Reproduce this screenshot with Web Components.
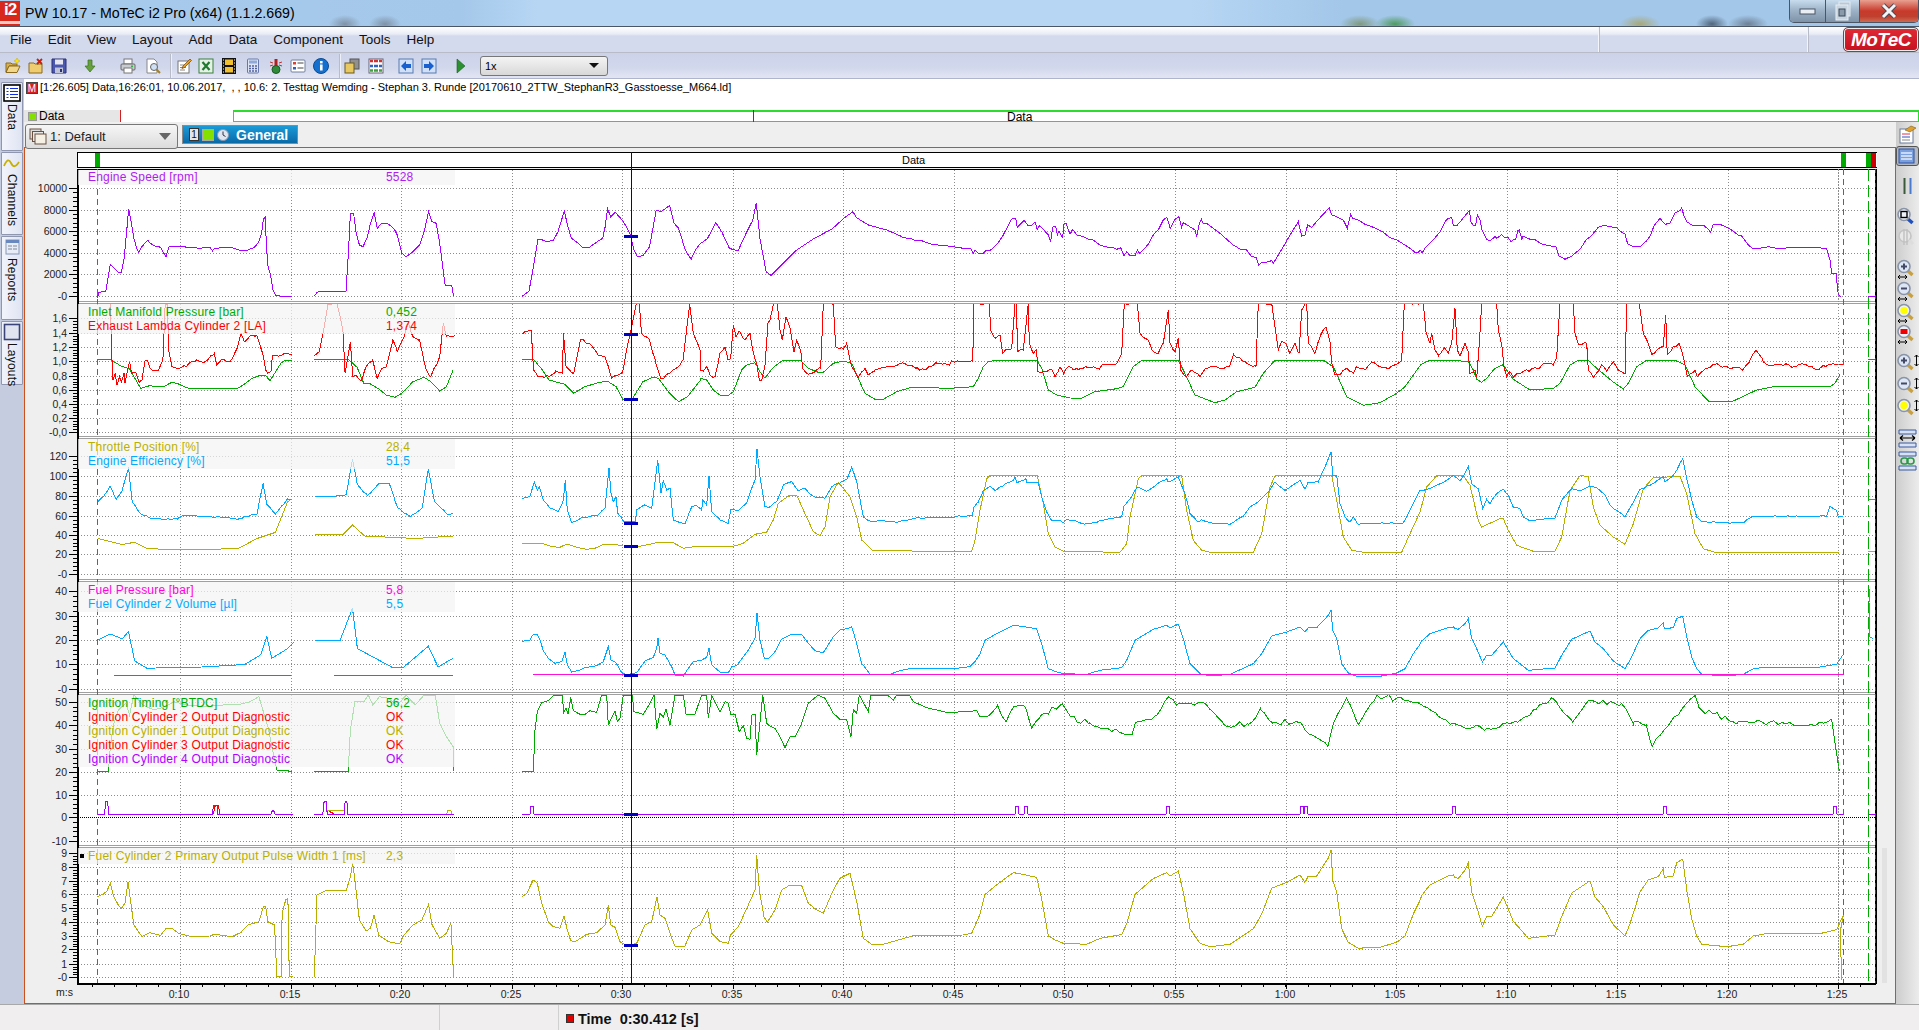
<!DOCTYPE html>
<html>
<head>
<meta charset="utf-8">
<title>MoTeC i2 Pro</title>
<style>
  html,body{margin:0;padding:0;width:1919px;height:1030px;overflow:hidden;background:#f0f0f0;}
  body{font-family:"Liberation Sans",Arial,sans-serif;}
  motec-app{width:1919px;height:1030px;}
</style>
</head>
<body>
<motec-app>
  <title-bar slot="top">PW 10.17 - MoTeC i2 Pro (x64) (1.1.2.669)</title-bar>
  <menu-bar slot="top"></menu-bar>
  <tool-bar slot="top"></tool-bar>
  <side-tabs slot="left"></side-tabs>
  <info-row slot="center">[1:26.605] Data,16:26:01, 10.06.2017,&nbsp; , , 10.6: 2. Testtag Wemding - Stephan 3. Runde [20170610_2TTW_StephanR3_Gasstoesse_M664.ld]</info-row>
  <data-bar slot="center"></data-bar>
  <work-area slot="work">
    <combo-row slot="head"></combo-row>
    <i2-chart>
      <chart-pane name="engine" style="--lp:0">
        <legend-row color="#b01cf0" label="Engine Speed [rpm]" value="5528"></legend-row>
      </chart-pane>
      <chart-pane name="lambda">
        <legend-row color="#00aa00" label="Inlet Manifold Pressure [bar]" value="0,452"></legend-row>
        <legend-row color="#ff0000" label="Exhaust Lambda Cylinder 2 [LA]" value="1,374"></legend-row>
      </chart-pane>
      <chart-pane name="throttle">
        <legend-row color="#b8b000" label="Throttle Position [%]" value="28,4"></legend-row>
        <legend-row color="#00aaff" label="Engine Efficiency [%]" value="51,5"></legend-row>
      </chart-pane>
      <chart-pane name="fuel">
        <legend-row color="#ff00e0" label="Fuel Pressure [bar]" value="5,8"></legend-row>
        <legend-row color="#00aaff" label="Fuel Cylinder 2 Volume [µl]" value="5,5"></legend-row>
      </chart-pane>
      <chart-pane name="ignition">
        <legend-row color="#00aa00" label="Ignition Timing [°BTDC]" value="56,2"></legend-row>
        <legend-row color="#ff0000" label="Ignition Cylinder 2 Output Diagnostic" value="OK"></legend-row>
        <legend-row color="#b8b000" label="Ignition Cylinder 1 Output Diagnostic" value="OK"></legend-row>
        <legend-row color="#ff0000" label="Ignition Cylinder 3 Output Diagnostic" value="OK"></legend-row>
        <legend-row color="#b000ff" label="Ignition Cylinder 4 Output Diagnostic" value="OK"></legend-row>
      </chart-pane>
      <chart-pane name="pulse">
        <legend-row color="#b8b000" label="Fuel Cylinder 2 Primary Output Pulse Width 1 [ms]" value="2,3"></legend-row>
      </chart-pane>
    </i2-chart>
  </work-area>
  <right-tools slot="work"></right-tools>
  <status-bar slot="bottom"></status-bar>
</motec-app>

<script>
// page coords of a crop: trace points below were read off the zoomed crops
const Z3 = [0,160,2.24,3], Z4 = [0,680,2.24,3], Z7 = [480,290,3,3], Z8 = [900,170,3,3], Z9 = [1380,170,3,3];
const Z10 = [900,437,3,3], Z11 = [1380,437,3,3], Z12 = [480,580,3,3], S = [0,0,.8171,.8171];

function seg(crop, str, xmin = -1e9, xmax = 1e9){
  return str.trim().split(/\s+/).map(p => {
    const [x,y] = p.split(',').map(Number);
    return [crop[0] + x / crop[2], crop[1] + y / crop[3]];
  }).filter(p => p[0] >= xmin && p[0] <= xmax);
}

// sensor noise: the logged traces are jagged, the points read off are not
function rough(pts, amp, step = 3){
  const noise = x => { const s = Math.sin(x * 12.9898) * 43758.5453; return s - Math.floor(s) - .5; };
  const out = [];
  pts.forEach((p,i) => {
    const q = pts[i+1];
    out.push(p);
    if(!q) return;
    const dx = q[0] - p[0], dy = q[1] - p[1];
    if(Math.abs(dy) > dx * 5) return;
    for(let x = p[0] + step; x < q[0]; x += step){
      out.push([x, p[1] + dy * (x - p[0]) / dx + amp * 2 * noise(x)]);
    }
  });
  return out;
}

const PURPLE = '#aa00ff', GREEN = '#00aa00', RED = '#ff0000', OLIVE = '#b8b000', BLUE = '#00aaff', MAGENTA = '#ff10d8';

const engine3 = [].concat(
  seg(Z3,'1170,409 1185,393 1195,320 1205,238 1215,240 1225,245 1240,240 1250,215 1258,180 1264,153 1272,200 1280,235 1295,250 1305,262 1320,262 1340,243 1350,235 1355,205 1361,147 1368,170 1378,157 1395,182 1405,205 1412,225 1420,270 1428,290 1440,287 1455,260 1470,150 1480,155 1500,137 1510,190 1520,205 1535,270 1548,298 1558,270 1568,252'),
  seg(S,'578,195 585,182 590,190 596,203 603,205 610,190 615,180 618,166 621,195 626,222 630,225 640,215 650,205 665,195 680,187 690,178 697,173 700,178 710,184 725,188 734,192'),
  seg(Z8,'0,197 10,203 35,206 45,211 65,212 80,218 100,224 130,226 160,230 190,235 212,235 220,250 225,241 235,250 250,250 260,240 272,240 295,218 310,195 320,175 335,147 347,145 352,172 365,158 372,151 385,168 395,165 405,157 412,178 418,167 430,178 445,195 452,215 458,172 467,168 472,195 477,183 488,203 492,162 498,160 510,193 518,178 530,195 550,200 565,208 580,210 600,225 620,231 640,233 650,238 662,233 672,257 680,245 690,257 705,257 712,240 718,250 735,235 745,222 760,195 775,180 790,150 800,142 811,175 825,148 837,140 845,172 850,158 865,167 885,180 890,200 898,160 904,148 910,162 920,160 940,175 960,190 980,208 1000,225 1020,237 1040,240 1055,260 1068,262 1076,286 1085,276 1100,276 1115,272 1120,280 1150,230 1170,195 1195,155 1205,198 1215,195 1223,165 1235,172 1260,143 1288,113 1295,135 1310,140 1330,150 1342,175 1352,132 1358,145 1375,150 1395,163 1420,172 1450,187 1470,203 1490,210 1510,222 1530,235 1545,247 1555,248',0,1420),
  seg(Z9,'120,240 127,248 135,235 160,210 180,185 195,155 205,145 215,143 220,165 232,165 245,150 255,137 268,122 273,155 280,167 287,165 292,135 300,150 307,183 320,208 330,212 345,200 350,205 365,194 372,202 385,203 393,215 400,210 407,208 413,182 418,180 425,207 430,198 450,208 465,209 485,222 505,227 528,230 537,258 555,268 575,258 600,238 620,207 632,200 655,172 672,166 690,170 710,173 725,187 735,192 743,222 760,230 780,230 800,212 812,195 822,167 840,145 855,163 870,160 885,128 900,122 905,113 912,138 920,155 935,165 950,165 970,165 985,178 992,187 1000,163 1020,163 1050,177 1075,195 1085,198 1105,225 1120,237 1150,233 1165,230 1190,235 1250,233 1300,231 1340,236 1350,270 1355,310 1368,310 1375,375 1382,380')
);

const green3 = [].concat(
  seg(Z3,'1170,598 1195,598 1215,630 1230,660 1265,673 1285,700 1310,680 1340,668 1360,663 1380,680 1395,718 1415,720 1440,665 1462,652 1475,655 1500,700 1520,725 1540,710 1568,662'),
  seg(Z7,'660,265 680,270 700,300 720,315 745,316 760,305 785,240 800,225 825,218 840,245 855,265 880,232 905,213 960,211 985,235 1015,247 1030,247 1060,220 1090,213 1115,220 1135,265 1155,310 1185,328 1210,328 1250,305',0,900),
  seg(Z8,'0,662 35,652 150,655 220,650 235,625 250,590 265,575 285,571 410,571 425,595 445,660 470,675 510,684 545,685 585,665 650,656 670,650 685,620 700,590 725,571 835,571 850,600 885,675 945,698 975,690 1010,665 1065,652 1090,610 1125,571 1270,571 1300,590 1340,680 1390,706 1440,698 1490,670 1515,650 1560,587',900,1420),
  seg(Z9,'120,585 150,571 220,571 265,575 280,600 290,628 305,637 320,625 345,595 370,584 380,600 400,628 450,660 520,655 540,640 570,585 595,571 625,571 650,595 700,636 730,657 745,640 770,590 800,571 885,571 915,585 945,650 985,693 1060,693 1130,660 1180,650 1350,650 1365,640 1380,612')
);

const red3 = [].concat(
  seg(Z3,'1170,522 1190,512 1195,630 1205,650 1230,650 1245,632 1260,640 1262,518 1268,620 1285,640 1300,540 1320,550 1340,585 1355,590 1370,655 1395,635 1405,560 1412,520 1425,432 1432,432 1437,520 1455,540 1470,615 1480,655 1500,640 1515,625 1530,600 1545,432 1553,520 1568,570'),
  seg(Z7,'660,240 670,243 680,230 690,255 705,260 720,190 735,170 745,210 752,205 760,105 768,140 780,125 795,150 810,130 818,180 830,220 838,270 845,270 855,225 864,100 870,90 880,42 892,42 900,120 907,150 918,80 930,115 942,185 950,150 962,180 968,235 985,253 1010,240 1022,235 1030,42 1060,42 1067,170 1090,178 1100,160 1115,230 1135,262 1155,235 1165,255 1185,240 1210,232 1235,228 1258,222',0,900),
  seg(Z8,'0,580 30,585 50,592 70,600 90,590 110,580 130,580 150,582 155,572 180,575 218,575 222,400 268,400 272,480 285,505 300,495 308,550 320,540 335,535 345,400 350,400 352,545 370,540 385,400 388,520 400,550 410,540 413,605 430,605 455,598 465,620 480,590 490,612 505,590 520,600 540,595 560,592 580,590 598,597 610,582 650,580 665,550 673,400 712,400 720,490 745,510 755,540 775,550 790,520 805,420 810,520 825,545 835,505 842,600 860,620 875,600 900,620 915,597 950,590 970,597 990,585 1000,552 1040,580 1068,590 1075,400 1115,400 1125,470 1135,540 1145,515 1160,525 1170,550 1185,520 1197,550 1205,420 1215,400 1220,400 1225,520 1245,550 1260,500 1278,470 1290,515 1295,580 1305,615 1320,615 1340,595 1360,610 1370,590 1395,600 1415,575 1440,590 1465,597 1490,582 1505,570 1513,400 1520,400',900,1420),
  seg(Z9,'130,400 138,485 150,520 155,490 165,540 175,558 195,535 205,550 215,520 225,415 232,540 240,558 255,520 265,545 270,610 285,600 290,625 298,520 305,400 350,400 355,480 365,520 372,590 380,620 390,605 400,622 410,610 430,605 470,595 495,580 520,585 530,560 540,400 580,400 585,490 595,525 620,520 625,600 640,622 665,585 680,605 700,575 715,600 735,612 740,400 778,400 790,490 805,520 815,553 830,540 850,530 857,435 862,555 880,530 897,520 912,570 922,620 945,600 952,620 980,595 1010,580 1030,590 1060,592 1090,597 1110,570 1128,540 1150,575 1175,588 1200,582 1240,590 1270,582 1300,595 1320,595 1350,583 1390,583')
);

const eff3 = [].concat(
  seg(Z7,'127,625 150,618 163,575 172,600 178,590 190,630 210,655 235,665 250,630 256,570 262,660 275,698 300,685 355,675 375,655 387,533 393,610 400,635 408,620 413,670 430,693 466,695 470,660 495,645 515,655 533,510 543,610 550,572 560,600 570,595 580,690 615,702 635,650 650,648 665,660 668,630 680,645 687,558 695,665 720,690 745,700 752,660 775,662 800,640 815,595 825,570 831,478 840,560 855,650 870,650 890,635 910,585 935,575 955,603 975,595 1000,620 1025,622 1035,625 1055,590 1085,575 1100,570 1115,530 1130,575 1150,680 1170,693 1215,693 1250,697',0,900),
  seg(Z10,'0,253 50,241 150,243 180,237 217,235 222,210 235,195 250,160 270,147 285,162 310,145 340,130 345,120 350,137 378,125 380,137 415,137 425,180 440,225 455,250 480,250 490,258 500,247 530,253 555,260 580,258 600,250 665,238 672,208 690,187 712,150 740,163 770,142 800,125 805,135 835,120 855,170 870,230 895,255 905,248 935,258 990,262 1030,238 1050,210 1080,190 1100,170 1125,135 1155,160 1200,130 1215,155 1225,135 1255,135 1275,90 1293,45 1298,115 1310,115 1320,200 1335,240 1350,255 1360,240 1375,262 1450,258 1510,258 1530,220 1560,160',900,1420),
  seg(Z11,'130,160 170,145 205,127 218,115 240,133 265,88 275,140 295,155 308,215 320,187 330,200 350,170 370,157 385,175 400,210 420,215 430,240 450,252 525,243 545,190 575,155 605,160 630,148 650,152 675,175 690,205 735,240 760,195 780,157 810,145 850,120 855,135 880,115 890,100 908,65 920,125 935,190 950,240 965,255 1090,258 1115,238 1190,238 1340,238 1350,207 1370,220 1375,240 1390,238')
);

const throttle3 = [].concat(
  seg(Z7,'127,761 190,761 215,770 240,772 260,762 290,772 320,778 345,775 370,763 400,762 430,768 480,769 530,758 580,758 610,775 650,769 760,769 790,760 825,733 860,726 880,690 895,640 930,615 950,615 970,660 1000,725 1020,737 1035,710 1050,620 1075,577 1110,620 1130,680 1145,750 1180,783 1250,782',0,900),
  seg(Z10,'0,340 50,343 215,343 225,310 240,220 260,125 270,116 412,116 430,200 445,290 465,330 490,343 660,346 680,320 690,240 715,125 725,116 845,116 860,220 880,310 905,340 930,346 1060,346 1085,290 1110,150 1125,116 1295,116 1310,190 1330,300 1355,340 1390,346 1505,346 1530,290 1560,225',900,1420),
  seg(Z11,'140,150 170,116 250,116 270,145 295,250 305,270 360,245 370,245 385,280 410,325 460,343 525,343 545,300 570,160 600,116 625,118 640,210 660,265 700,300 735,322 760,260 790,155 820,122 900,118 920,170 945,290 970,335 1005,346 1378,346')
);

const vol3 = [].concat(
  seg(Z12,'127,184 150,180 158,165 172,163 180,180 190,212 205,235 225,250 245,245 255,217 262,255 275,276 300,270 315,263 350,257 370,245 385,200 393,240 408,248 425,278 440,284 470,278 495,243 520,232 530,205 534,175 540,220 555,225 575,260 585,285 610,288 625,265 640,245 665,240 680,232 687,205 695,255 720,276 745,278 755,260 770,257 790,230 805,210 825,175 831,100 840,180 853,235 865,237 885,215 905,177 935,163 965,163 985,190 1005,212 1030,218 1060,170 1080,150 1105,145 1115,140 1130,190 1145,250 1170,282 1230,283 1260,272 1295,265 1430,265 1470,260 1485,245 1500,222',0,980),
  seg(Z10,'240,650 255,610 290,590 340,565 378,570 410,575 425,620 445,695 465,703 490,710 560,712 600,700 665,692 680,670 705,610 760,577 800,565 810,572 835,562 850,605 870,680 900,710 930,717 990,712 1060,680 1085,650 1115,597 1160,585 1200,570 1215,585 1225,572 1250,572 1285,535 1293,518 1298,580 1310,605 1325,680 1345,708 1375,720 1440,718 1490,708 1515,695 1540,650 1560,622',980,1420),
  seg(Z11,'125,612 150,590 205,572 220,570 225,575 235,577 255,560 265,545 275,605 290,635 307,675 320,655 335,655 370,615 385,640 400,665 420,680 445,700 525,693 545,655 575,607 630,582 645,615 670,635 700,672 735,695 750,670 780,605 805,580 835,573 850,557 853,575 880,572 890,545 908,537 920,600 935,660 950,695 965,712 1040,717 1090,712 1120,695 1160,690 1320,690 1370,682 1390,652')
);

const timing3 = [].concat(
  seg(Z12,'127,575 160,575 165,450 172,395 185,368 205,362 222,345 248,345 250,400 258,385 264,403 272,352 280,392 300,403 315,403 330,392 350,397 365,345 380,345 385,435 405,392 412,425 420,415 430,345 457,345 462,395 490,403 510,370 522,345 530,447 540,400 550,410 558,388 570,435 585,345 610,345 618,403 645,403 665,345 680,345 685,415 695,345 720,397 735,365 745,370 752,403 765,403 778,455 790,437 800,475 810,478 815,405 825,403 830,525 848,345 860,430 868,437 885,445 900,470 915,503 930,470 945,470 965,430 985,370 1015,345 1035,355 1060,400 1080,418 1100,420 1113,470 1120,390 1130,400 1138,345 1165,395 1172,345 1222,345 1240,360 1250,345 1290,348 1300,365 1340,383 1400,397 1470,395 1490,390 1500,410'),
  rough(seg(S,'808,585 815,576 822,590 830,577 838,578 843,595 850,585 868,575 880,590 890,590 905,595 925,600 928,590 945,585 955,570 963,575 985,575 1000,592 1020,592 1030,580 1040,590 1060,590 1070,600 1085,610 1090,590 1100,570 1105,580 1110,592 1125,568 1160,575 1175,585 1190,592 1215,595 1240,590 1255,580 1268,570 1285,590 1300,572 1325,575 1335,590 1345,592 1350,610 1365,590 1385,568 1390,580 1420,590 1480,592 1497,590 1500,612 1503,630'),3,4)
);

// primary pulse follows the fuel volume trace past the part read off directly
const pulse3 = seg(Z12,'127,950 140,940 160,900 172,910 185,970 205,1025 220,1040 240,1045 252,1008 262,1050 272,1082 285,1085 320,1063 350,1058 375,1035 385,975 392,1035 405,1042 420,1085 440,1097 470,1090 495,1035 515,1025 531,950 540,1005 555,1015 575,1075 585,1098 615,1098 635,1050 660,1035 683,990 695,1060 720,1085 745,1090 752,1065 775,1040 805,975 825,930 830,825 838,930 852,1010 862,1027 885,990 905,930 930,915 965,917 985,970 1010,990 1030,1000 1060,930 1080,895 1110,880 1130,965 1150,1075 1175,1093 1210,1093 1300,1067 1450,1065 1475,1060 1500,1003')
  .concat(vol3.filter(p => p[0] > 980).map(p => [p[0], 855 + 1.463 * (p[1] - 613.3)]))
  .concat([[1840,933],[1842,980]]);

function spikes(xs, base = 814.3, top = 806){
  const pts = [[522,base]];
  xs.forEach(x => pts.push([x-2,base],[x-1,top],[x+1,top],[x+2,base]));
  pts.push([1843,base]);
  return pts;
}

const PANES = {
  engine:{ top:170, h:131,
    grid:[[188,'10000'],[210,'8000'],[231,'6000'],[253,'4000'],[274,'2000'],[296,'-0']],
    traces:[[PURPLE,[
      seg(Z3,'218,413 222,397 237,393 243,345 247,313 258,328 265,337 272,337 278,295 284,210 288,148 293,180 300,235 306,265 311,278 317,262 325,248 331,241 337,250 345,257 360,262 367,280 372,290 378,262 385,258 400,260 430,262 445,265 470,262 476,272 480,265 500,263 520,263 540,272 555,270 570,262 580,245 586,220 590,178 594,172 597,260 600,318 606,345 612,392 618,406 630,409 654,409'),
      seg(Z3,'704,409 710,397 720,394 775,394 780,290 785,160 792,160 798,220 805,255 813,260 822,235 830,190 838,157 845,205 855,190 870,192 883,207 890,225 900,280 910,290 925,275 940,255 950,215 960,155 968,185 977,190 985,250 997,375 1012,377 1016,408'),
      engine3,
      seg(Z9,'1465,380 1485,380')
    ]]]
  },
  lambda:{ top:304, h:132,
    grid:[[318,'1,6'],[333,'1,4'],[347,'1,2'],[361,'1,0'],[376,'0,8'],[390,'0,6'],[404,'0,4'],[418,'0,2'],[432,'-0,0']],
    traces:[[GREEN,[
      seg(Z3,'218,597 245,597 255,605 270,617 290,627 300,650 315,685 335,677 350,680 365,681 385,667 400,672 420,684 530,686 545,675 565,655 585,645 595,647 605,662 615,640 630,608 640,600 654,601'),
      seg(Z3,'704,598 780,598 800,622 815,670 830,672 850,688 865,705 885,712 900,700 925,665 950,652 965,665 985,693 1000,680 1015,630'),
      green3,
      seg(Z9,'1465,568 1485,568')
    ]],[RED,[
      rough(seg(Z3,'247,432 250,570 253,660 258,640 262,675 268,650 272,665 278,640 280,670 285,635 290,605 295,640 305,640 312,665 318,660 325,600 330,600 336,625 345,632 355,630 365,600 370,432 375,432 378,570 385,620 405,623 420,615 430,605 440,600 450,605 465,600 480,580 485,615 495,600 515,605 530,570 540,520 548,545 558,530 575,525 590,590 595,630 600,640 608,630 610,585 654,583'),1.5),
      rough(seg(Z3,'704,587 715,575 725,510 735,432 755,432 768,510 773,640 785,545 790,650 800,650 810,660 820,620 835,600 845,655 855,625 865,620 880,540 890,575 905,530 915,490 925,530 940,540 955,630 965,650 985,590 993,490 1000,527 1020,527'),1.5),
      rough(red3,1.5)
    ]]]
  },
  throttle:{ top:439, h:140,
    grid:[[456,'120'],[476,'100'],[496,'80'],[516,'60'],[535,'40'],[554,'20'],[574,'-0']],
    traces:[[OLIVE,[
      seg(S,'80,440 100,445 110,443 120,448 135,449 170,449 195,448 210,440 225,435 235,410 238,408'),
      seg(S,'257,437 280,437 288,429 298,438 340,440 370,438'),
      throttle3,
      seg(Z11,'1465,343 1485,343')
    ]],[BLUE,[
      rough(seg(S,'80,410 85,405 90,397 95,408 100,400 105,382 108,410 115,420 125,424 145,424 150,421 170,422 195,424 210,420 215,395 218,412 225,420 235,408 238,408'),.8),
      rough(seg(S,'257,406 270,406 283,404 288,375 292,396 300,405 310,395 318,395 325,415 335,422 345,415 350,383 355,410 365,420 370,420'),.8),
      rough(eff3,.7,4),
      seg(Z11,'1465,187 1485,187')
    ]]]
  },
  fuel:{ top:582, h:110,
    grid:[[591,'40'],[616,'30'],[640,'20'],[664,'10'],[689,'-0']],
    traces:[[BLUE,[
      seg(S,'80,523 90,518 100,522 105,516 110,540 120,546 165,545 200,543 213,535 218,520 222,538 235,530 240,525'),
      seg(S,'257,523 278,523 288,497 292,530 305,537 320,545 330,545 350,528 358,545 370,538'),
      vol3,
      seg(Z11,'1467,455 1467,495 1470,600 1480,605')
    ]],[MAGENTA,[
      seg(S,'93,552 238,552'), seg(S,'273,552 370,552'), [[533,674.3],[1843,674.3]]
    ]]]
  },
  ignition:{ top:695, h:150, zero:817,
    grid:[[702,'50'],[725,'40'],[749,'30'],[772,'20'],[795,'10'],[817,'0'],[841,'-10']],
    traces:[[GREEN,[
      seg(Z4,'218,274 243,274 247,200 255,130 265,90 282,70 290,105 300,45 320,75 345,90 370,80 390,65 420,75 460,80 500,75 540,72 560,65 580,50 600,140 620,270 654,274'),
      seg(Z4,'704,274 780,274 785,150 795,65 815,65 825,45 835,75 850,50 870,55 890,75 910,45 930,75 950,45 975,45 985,130 1000,170 1015,200 1017,274'),
      timing3
    ]],[RED,[
      seg(Z4,'478,403 482,377 490,377 492,403'), seg(Z4,'733,403 735,392 750,403 770,403')
    ]],[OLIVE,[
      seg(Z4,'733,392 770,392'), seg(Z4,'1000,403 1003,392 1010,392 1012,403'), seg(Z4,'607,403 610,392 613,392 616,403')
    ]],[PURPLE,[
      seg(Z4,'218,403 234,403 237,365 241,365 244,403 476,403 478,377 486,377 488,403 607,403 610,392 613,392 616,403 656,403'),
      seg(Z4,'704,403 723,403 726,365 731,365 733,403 771,403 773,365 777,365 779,403 1016,403'),
      spikes([532,1017,1026,1168,1302,1306,1454,1665,1835]),
      [[1868,814.3],[1875,814.3]]
    ]]]
  },
  pulse:{ top:848, h:135,
    grid:[[853,'9'],[867,'8'],[881,'7'],[894,'6'],[908,'5'],[922,'4'],[936,'3'],[949,'2'],[964,'1'],[977,'-0']],
    traces:[[OLIVE,[
      seg(Z4,'218,650 232,642 240,632 247,610 255,650 265,675 272,685 280,670 287,605 292,660 300,735 318,770 335,758 360,766 372,745 385,745 400,760 430,770 470,768 480,763 520,770 540,757 555,735 580,725 590,680 595,680 600,725 615,735 620,890 630,890 632,700 640,660 645,655 648,890 656,890'),
      seg(Z4,'704,890 710,645 730,632 775,633 785,590 790,550 795,600 805,720 820,753 830,745 838,705 848,765 870,785 895,792 905,765 925,735 945,720 960,673 968,735 985,775 1000,760 1010,728 1016,890'),
      pulse3
    ]]]
  }
};

const MAJOR_X = [];
for(let k = 0; k <= 15; k++) MAJOR_X.push(Math.round(180 + 110.55 * k));

const toPath = pts => 'M' + pts.map(p => p[0].toFixed(1) + ' ' + p[1].toFixed(1)).join('L');

class MotecApp extends HTMLElement{
  constructor(){ super(); this.attachShadow({mode:'open'}); }
  static get styles(){
    return /* css */ `
      :host{display:flex;flex-direction:column;color:#000;font-family:"Liberation Sans",Arial,sans-serif;}
      .main{flex:0 0 925px;display:flex;min-height:0;}
      .center{flex:1;display:flex;flex-direction:column;min-width:0;}
      .lower{flex:1;display:flex;min-height:0;}
    `
  }
  connectedCallback(){
    this.shadowRoot.innerHTML = /* html */ `
    <style>${MotecApp.styles}</style>
    <slot name="top"></slot>
    <div class="main">
      <slot name="left"></slot>
      <div class="center">
        <slot name="center"></slot>
        <div class="lower"><slot name="work"></slot></div>
      </div>
    </div>
    <slot name="bottom"></slot>`
  }
}

class TitleBar extends HTMLElement{
  constructor(){ super(); this.attachShadow({mode:'open'}); }
  static get styles(){
    return /* css */ `
      :host{
        display:flex;align-items:center;height:27px;box-sizing:border-box;position:relative;
        border-bottom:1px solid #4a5566;
        background:
          radial-gradient(ellipse 16px 9px at 345px 24px,#7f93a8,transparent),
          radial-gradient(ellipse 16px 9px at 385px 24px,#7f93a8,transparent),
          radial-gradient(ellipse 20px 9px at 1360px 24px,#7f9a80,transparent),
          radial-gradient(ellipse 20px 9px at 1395px 24px,#4f9a60,transparent),
          radial-gradient(ellipse 20px 9px at 1640px 24px,#a8a878,transparent),
          radial-gradient(ellipse 16px 9px at 1712px 24px,#50667c,transparent),
          radial-gradient(ellipse 20px 9px at 1748px 24px,#6e8196,transparent),
          linear-gradient(90deg,#a8cbec 0,#a4c8ea 24%,#b7d6f4 28%,#b7d6f4 62%,#a3c7e9 70%,#a3c7e9 100%);
        font-size:14.2px;
      }
      .logo{
        width:20px;height:25px;margin-right:5px;background:#d8281c;color:#fff;font-weight:bold;font-size:17px;
        line-height:18px;text-align:center;letter-spacing:-1px;flex:none;position:relative;
      }
      .logo::after{content:"";position:absolute;left:0;right:0;bottom:2px;height:3px;background:#fff;opacity:.75;}
      .title{white-space:nowrap;color:#000;}
      .ctl{margin-left:auto;display:flex;height:23px;align-self:flex-start;border:1px solid #4a5566;border-top:0;border-radius:0 0 5px 5px;overflow:hidden;box-sizing:border-box;width:130px;}
      .ctl div{display:flex;align-items:center;justify-content:center;background:linear-gradient(#c8dcee,#9fb4c8 45%,#7e93a8);border-right:1px solid #4a5566;}
      .min{width:35px;}
      .max{width:33px;}
      .x{flex:1;border-right:0 !important;background:linear-gradient(#e8a090,#c83a2a 50%,#c04030 75%,#d06a50) !important;}
    `
  }
  connectedCallback(){
    this.shadowRoot.innerHTML = /* html */ `
    <style>${TitleBar.styles}</style>
    <div class="logo">i2</div>
    <div class="title"><slot></slot></div>
    <div class="ctl">
      <div class="min"><svg width="18" height="8"><rect x="1" y="2" width="15" height="5" fill="#e8eef4" stroke="#4a5566"/></svg></div>
      <div class="max"><svg width="18" height="20"><rect x="5" y="1" width="11" height="14" fill="#b8c8d8" stroke="#e4ecf4"/><rect x="2" y="4" width="12" height="15" fill="#c8d4e0" stroke="#e8eef4"/><rect x="5" y="8" width="6" height="7" fill="#8a9aaa" stroke="#3a4a5a"/></svg></div>
      <div class="x"><svg width="18" height="16"><path d="M3 2l12 12M15 2L3 14" stroke="#4a4a55" stroke-width="5"/><path d="M3 2l12 12M15 2L3 14" stroke="#f4f4f4" stroke-width="3"/></svg></div>
    </div>`
  }
}

class MenuBar extends HTMLElement{
  constructor(){ super(); this.attachShadow({mode:'open'}); }
  static get styles(){
    return /* css */ `
      :host{
        display:flex;align-items:center;height:26px;box-sizing:border-box;position:relative;padding-left:10px;column-gap:16px;
        background:linear-gradient(#ffffff,#e9ecf5 28%,#d4daed 36%,#d4daed);
        border-bottom:1px solid #b8bcc8;font-size:13.5px;
      }
      span{color:#111;}
      .sep{position:absolute;top:0;bottom:0;width:1px;background:#f4f5fa;border-right:1px solid #b8bcc8;}
      .logo{
        position:absolute;right:0;top:0;width:76px;height:25px;box-sizing:border-box;
        border:1px solid #555;border-radius:5px;background:linear-gradient(#e02a36,#c8101e);box-shadow:inset 0 0 0 1px #eee;
        color:#fff;font-weight:bold;font-style:italic;font-size:19px;line-height:23px;text-align:center;letter-spacing:-.5px;
      }
    `
  }
  connectedCallback(){
    const items = ['File','Edit','View','Layout','Add','Data','Component','Tools','Help'];
    this.shadowRoot.innerHTML = /* html */ `
    <style>${MenuBar.styles}</style>
    ${items.map(m => `<span>${m}</span>`).join('')}
    <div class="sep" style="left:1598px"></div>
    <div class="sep" style="left:1807px"></div>
    <div class="logo">MoTeC</div>`
  }
}

const ICONS = {
  open:`<path d="M1 5h5l1 1h5v2H4l-3 6z" fill="#d8b050" stroke="#8a6a20"/><path d="M4 8h11l-3 6.5H1z" fill="#f2d68a" stroke="#8a6a20"/><path d="M12 0l1 2 2 1-2 1-1 2-1-2-2-1 2-1z" fill="#ffe600" stroke="#b89a10" stroke-width=".4"/>`,
  close:`<path d="M1 5h5l1 1h7v9H1z" fill="#f0cc70" stroke="#8a6a20"/><path d="M9 1l5 5M14 1L9 6" stroke="#c82010" stroke-width="1.8"/>`,
  save:`<path d="M1 1h14v14H1z" fill="#4a58b0" stroke="#2a3070"/><rect x="4" y="1.5" width="8" height="5" fill="#e8e8f0"/><rect x="4" y="9.5" width="8" height="5.5" fill="#c0c4d8"/><rect x="9" y="11" width="2" height="3" fill="#2a3070"/>`,
  down:`<path d="M6 2h4v6h3l-5 6-5-6h3z" fill="#68a040" stroke="#3a7020" stroke-width=".7"/>`,
  print:`<rect x="4" y="1" width="8" height="5" fill="#fff" stroke="#777"/><rect x="1" y="6" width="14" height="6" rx="1" fill="#c8ccd0" stroke="#666"/><rect x="4" y="10" width="8" height="5" fill="#fff" stroke="#777"/><rect x="11" y="7.5" width="2" height="1.5" fill="#30b040"/>`,
  preview:`<path d="M2 1h7l3 3v11H2z" fill="#fff" stroke="#888"/><circle cx="9" cy="9" r="3.5" fill="#cfe0f4" stroke="#666"/><path d="M11.5 11.5l3.5 3.5" stroke="#a08030" stroke-width="2"/>`,
  note:`<rect x="2" y="3" width="11" height="12" fill="#fff" stroke="#777"/><path d="M4 7h6M4 9.5h6M4 12h5" stroke="#888"/><path d="M14 1l1.5 1.5-7 7-2.5 1 1-2.5z" fill="#e8a020" stroke="#704010" stroke-width=".7"/>`,
  excel:`<rect x="1" y="1" width="14" height="14" fill="#e6f2e6" stroke="#3a8040"/><path d="M4.5 4l7 8M11.5 4l-7 8" stroke="#1f7a30" stroke-width="2.2"/>`,
  film:`<rect x="1" y="0" width="14" height="16" fill="#111"/><rect x="4" y="1.5" width="8" height="5.5" fill="#f0c030"/><rect x="4" y="9" width="8" height="5.5" fill="#f0c030"/><path d="M2 2h1M2 5h1M2 8h1M2 11h1M2 14h1M13 2h1M13 5h1M13 8h1M13 11h1M13 14h1" stroke="#fff"/>`,
  calc:`<rect x="2.5" y="1" width="11" height="14" rx="1" fill="#dde4f4" stroke="#6878a8"/><rect x="4" y="2.5" width="8" height="3" fill="#8fa8d8"/><path d="M4 8h2M7 8h2M10 8h2M4 10.5h2M7 10.5h2M10 10.5h2M4 13h2M7 13h2M10 13h2" stroke="#5060a0" stroke-width="1.4"/>`,
  temp:`<path d="M8 1v7" stroke="#b02020" stroke-width="3"/><path d="M2 4l3 1M14 4l-3 1M2 8l3-1M14 8l-3-1" stroke="#c03030"/><circle cx="8" cy="11.5" r="4" fill="#2f8a3a" stroke="#1a5a20"/>`,
  list:`<rect x="1" y="2" width="14" height="12" rx="1" fill="#fff" stroke="#7080a0"/><rect x="3" y="4" width="3" height="2.5" fill="#e04030"/><rect x="3" y="9" width="3" height="2.5" fill="#3060c0"/><path d="M7.5 5h6M7.5 10h6" stroke="#444"/>`,
  info:`<circle cx="8" cy="8" r="7.5" fill="#1470d0" stroke="#0c4a90"/><rect x="7" y="6.5" width="2.6" height="6" fill="#fff"/><rect x="7" y="3" width="2.6" height="2.4" fill="#fff"/>`,
  copies:`<rect x="6" y="1" width="9" height="10" fill="#909090" stroke="#555"/><rect x="1" y="5" width="9" height="10" fill="#e8c860" stroke="#6a5a20"/>`,
  grid:`<rect x="1" y="1" width="14" height="14" fill="#fff" stroke="#667"/><path d="M2 3h3M6 3h4M11 3h3" stroke="#d03030" stroke-width="2.4"/><path d="M2 8h3M6 8h4M11 8h3" stroke="#3060c0" stroke-width="2.4"/><path d="M2 12.5h3M6 12.5h4M11 12.5h3" stroke="#40a040" stroke-width="2.4"/>`,
  back:`<rect x="1" y="1" width="14" height="14" fill="#cfe0f8" stroke="#5a7ab0"/><path d="M3 8l5-5v3h5v4H8v3z" fill="#1860d0"/>`,
  fwd:`<rect x="1" y="1" width="14" height="14" fill="#cfe0f8" stroke="#5a7ab0"/><path d="M13 8L8 3v3H3v4h5v3z" fill="#1860d0"/>`,
  play:`<path d="M4 1l8 7-8 7z" fill="#2a9030" stroke="#1a6020" stroke-width=".6"/>`
};

class ToolBar extends HTMLElement{
  constructor(){ super(); this.attachShadow({mode:'open'}); }
  static get styles(){
    return /* css */ `
      :host{
        display:flex;align-items:center;height:26px;box-sizing:border-box;position:relative;
        background:linear-gradient(#ccd2e8,#d2d8ec 60%,#e2e5f3);
        border-bottom:1px solid #b0b4cc;
      }
      svg{width:16px;height:16px;flex:none;}
      i{flex:none;width:1px;height:24px;background:#eef0f8;box-shadow:-1px 0 0 #b8bcc8;}
      .combo{
        flex:none;width:128px;height:20px;box-sizing:border-box;border:1px solid #777;border-radius:3px;
        background:linear-gradient(#f4f4f4,#d8d8d8);font-size:11px;display:flex;align-items:center;padding:0 8px 0 4px;justify-content:space-between;
      }
      .tri{width:0;height:0;border-left:5px solid transparent;border-right:5px solid transparent;border-top:5px solid #111;}
    `
  }
  connectedCallback(){
    const list = [['open',5],['close',28],['save',51],['down',82],['print',120],['preview',145],['|',171],['note',176],['excel',198],['film',221],['calc',245],['temp',268],['list',290],['info',313],['|',340],['copies',344],['grid',368],['back',398],['fwd',421],['play',453]];
    let x = 0, html = '';
    list.forEach(([n,left]) => {
      const m = left - x;
      if(n === '|'){ html += `<i style="margin-left:${m}px"></i>`; x = left + 1; }
      else { html += `<svg viewBox="0 0 16 16" style="margin-left:${m}px">${ICONS[n]}</svg>`; x = left + 16; }
    });
    this.shadowRoot.innerHTML = /* html */ `
    <style>${ToolBar.styles}</style>
    ${html}
    <div class="combo" style="margin-left:${480 - x}px"><span>1x</span><span class="tri"></span></div>`
  }
}

class SideTabs extends HTMLElement{
  constructor(){ super(); this.attachShadow({mode:'open'}); }
  static get styles(){
    return /* css */ `
      :host{display:flex;flex-direction:column;width:24px;flex:none;box-sizing:border-box;padding:3px 1px 0 1px;background:#c5cce0;row-gap:1px;}
      .tab{
        box-sizing:border-box;width:22px;border:1px solid #8f97b0;border-radius:1px;
        background:linear-gradient(90deg,#f2f4fb,#dfe4f3);display:flex;flex-direction:column;align-items:center;padding-top:1px;
      }
      svg{width:18px;height:18px;flex:none;}
      span{writing-mode:vertical-rl;font-size:12px;margin-top:2px;color:#111;letter-spacing:.2px;}
    `
  }
  connectedCallback(){
    const tabs = [
      ['Data',69,`<rect x="1" y="1" width="16" height="16" fill="#fff" stroke="#000" stroke-width="1.6"/><path d="M3.5 4.5h2M7 4.5h8M3.5 7.5h2M7 7.5h8M3.5 10.5h2M7 10.5h8M3.5 13.5h2M7 13.5h8" stroke="#1030e0" stroke-width="1.2"/>`],
      ['Channels',83,`<path d="M1 12c3-7 5-7 7-3s4 5 8-1" fill="none" stroke="#c8b000" stroke-width="1.8"/>`],
      ['Reports',84,`<rect x="3" y="2" width="13" height="14" fill="#e8ecf6" stroke="#8898b8"/><rect x="3" y="2" width="13" height="3" fill="#6a88c0"/><path d="M5 8h4M10 8h4M5 11h4M10 11h4" stroke="#a0a8b8" stroke-width="1.5"/>`],
      ['Layouts',64,`<rect x="1.5" y="1.5" width="15" height="15" fill="#dfe4f0" stroke="#3a4478" stroke-width="1.6"/>`]
    ];
    this.shadowRoot.innerHTML = /* html */ `
    <style>${SideTabs.styles}</style>
    ${tabs.map(t => `<div class="tab" style="height:${t[1]}px"><svg viewBox="0 0 18 18">${t[2]}</svg><span>${t[0]}</span></div>`).join('')}`
  }
}

class InfoRow extends HTMLElement{
  constructor(){ super(); this.attachShadow({mode:'open'}); }
  connectedCallback(){
    this.shadowRoot.innerHTML = /* html */ `
    <style>
      :host{display:flex;align-items:flex-start;height:31px;box-sizing:border-box;background:#fff;padding:3px 0 0 2px;font-size:11px;white-space:pre;}
      .m{width:12px;height:12px;flex:none;background:#d82020;color:#fff;border:1px solid #444;box-sizing:border-box;font-size:10px;line-height:11px;text-align:center;margin-right:2px;}
      .t{line-height:11px;}
    </style>
    <div class="m">M</div><div class="t"><slot></slot></div>`
  }
}

class DataBar extends HTMLElement{
  constructor(){ super(); this.attachShadow({mode:'open'}); }
  connectedCallback(){
    this.shadowRoot.innerHTML = /* html */ `
    <style>
      :host{display:flex;height:12px;box-sizing:border-box;background:#fff;font-size:12px;line-height:12px;}
      .lab{width:97px;box-sizing:border-box;background:#e6e6e6;border-right:1px solid #d02020;display:flex;align-items:center;padding-left:4px;}
      .sq{width:9px;height:9px;background:#84e000;border:1px solid #999;box-sizing:border-box;margin-right:2px;}
      .gap{width:112px;}
      .box{flex:1;box-sizing:border-box;border:1px solid #2ddc2d;border-top-width:2px;position:relative;padding-left:773px;line-height:10px;}
      .tick{position:absolute;left:519px;top:-2px;bottom:-1px;width:1px;background:#2040c0;}
    </style>
    <div class="lab"><span class="sq"></span>Data</div>
    <div class="gap"></div>
    <div class="box"><span class="tick"></span>Data</div>`
  }
}

class WorkArea extends HTMLElement{
  constructor(){ super(); this.attachShadow({mode:'open'}); }
  connectedCallback(){
    this.shadowRoot.innerHTML = /* html */ `
    <style>
      :host{flex:0 0 1872px;width:1872px;display:flex;flex-direction:column;background:#efefef;min-height:0;}
      .frame{flex:1;border:1px solid #cc4f1c;box-sizing:border-box;min-height:0;}
    </style>
    <slot name="head"></slot>
    <div class="frame"><slot></slot></div>`
  }
}

class ComboRow extends HTMLElement{
  constructor(){ super(); this.attachShadow({mode:'open'}); }
  connectedCallback(){
    this.shadowRoot.innerHTML = /* html */ `
    <style>
      :host{display:flex;height:25px;box-sizing:border-box;padding:2px 0 0 1px;column-gap:4px;font-size:13px;}
      .combo{
        width:153px;height:25px;box-sizing:border-box;position:relative;z-index:2;border:1px solid #777;border-radius:3px;
        background:linear-gradient(#f6f6f6,#dcdcdc);display:flex;align-items:center;padding:0 6px 0 3px;color:#222;
      }
      svg{flex:none;margin-right:3px;}
      .tri{margin-left:auto;width:0;height:0;border-left:6px solid transparent;border-right:6px solid transparent;border-top:7px solid #666;}
      .tab{
        width:116px;height:19px;margin-top:1px;box-sizing:border-box;border:1px solid #8a8a8a;
        background:linear-gradient(#1a9ad8,#0a6aa8);display:flex;align-items:center;padding-left:6px;color:#fff;font-weight:bold;font-size:14px;
      }
      .n{width:10px;height:13px;background:#e4e4e4;border:1px solid #333;box-sizing:border-box;color:#111;font-size:10px;font-weight:normal;line-height:11px;text-align:center;margin-right:3px;}
      .g{width:12px;height:12px;background:#84e000;border:1px solid #aaa;box-sizing:border-box;margin-right:3px;}
      .tab svg{margin-right:7px;}
    </style>
    <div class="combo">
      <svg width="18" height="18" viewBox="0 0 18 18"><rect x="1" y="1" width="11" height="10" fill="#ddd" stroke="#6a5040"/><rect x="3.5" y="3.5" width="11" height="10" fill="#e8e8e8" stroke="#6a5040"/><rect x="6" y="6" width="11" height="10" fill="#f6f0e4" stroke="#6a5040"/></svg>
      <span>1: Default</span><span class="tri"></span>
    </div>
    <div class="tab"><span class="n">1</span><span class="g"></span><svg width="12" height="12" viewBox="0 0 12 12"><circle cx="6" cy="6" r="5.5" fill="#dfe6f0" stroke="#8a98b0"/><path d="M6 2.5V6l2.5 1.5" fill="none" stroke="#334"/></svg><span>General</span></div>`
  }
}

class LegendRow extends HTMLElement{
  constructor(){ super(); this.attachShadow({mode:'open'}); }
  connectedCallback(){
    this.shadowRoot.innerHTML = /* html */ `
    <style>
      :host{display:grid;grid-template-columns:298px auto;height:14px;line-height:14px;padding-left:10px;font-size:12px;letter-spacing:.2px;white-space:nowrap;color:${this.getAttribute('color')};}
    </style>
    <span>${this.getAttribute('label')}</span><span>${this.getAttribute('value')}</span>`
  }
}

class ChartPane extends HTMLElement{
  constructor(){ super(); this.attachShadow({mode:'open'}); }
  static get styles(){
    return /* css */ `
      :host{display:block;position:relative;flex:none;}
      svg{display:block;position:absolute;left:0;top:0;overflow:visible;}
      .legend{position:absolute;left:53px;top:0;width:377px;box-sizing:border-box;padding-top:var(--lp,1px);padding-bottom:1px;background:rgba(244,244,244,.72);z-index:3;}
      .dot{position:absolute;left:55px;top:6px;width:4px;height:4px;background:#000;z-index:4;}
      text{font:10.5px "Liberation Sans",Arial,sans-serif;fill:#222;}
    `
  }
  connectedCallback(){
    const p = PANES[this.getAttribute('name')];
    this.style.height = p.h + 'px';
    const bottom = p.top + p.h;
    let out = `<clipPath id="plot"><rect x="77" y="${p.top}" width="1799" height="${p.h}"/></clipPath>`;
    out += `<rect x="77" y="${p.top}" width="1799" height="${p.h}" fill="#fff"/>`;
    // horizontal grid, labels and the axis ticks
    p.grid.forEach(([y,label],i) => {
      const zero = p.zero === y;
      out += `<path d="M78 ${y+.5}H1875" stroke="${zero ? '#000' : '#8c8c8c'}" stroke-dasharray="${zero ? '1 1' : '1 2'}" shape-rendering="crispEdges"/>`;
      out += `<path d="M69 ${y+.5}H77" stroke="#000" shape-rendering="crispEdges"/>`;
      out += `<text x="67" y="${y+4}" text-anchor="end">${label}</text>`;
      const next = p.grid[i+1];
      if(next) for(let k = 1; k < 5; k++){
        const ty = Math.round(y + (next[0] - y) * k / 5) + .5;
        out += `<path d="M73 ${ty}H77" stroke="#000" shape-rendering="crispEdges"/>`;
      }
    });
    MAJOR_X.forEach(x => {
      out += `<path d="M${x+.5} ${p.top}V${bottom}" stroke="#8c8c8c" stroke-dasharray="1 2" shape-rendering="crispEdges"/>`;
    });
    let lines = '';
    p.traces.forEach(([color,list]) => {
      list.forEach(l => {
        lines += `<path d="${toPath(l)}" fill="none" stroke="${color}" stroke-width="1" shape-rendering="crispEdges"/>`;
      });
    });
    this.shadowRoot.innerHTML = /* html */ `
    <style>${ChartPane.styles}</style>
    <svg width="1870" height="${p.h}" viewBox="25 ${p.top} 1870 ${p.h}">${out}<g clip-path="url(#plot)">${lines}</g></svg>
    <div class="legend"><slot></slot></div>
    ${this.getAttribute('name') === 'pulse' ? '<div class="dot"></div>' : ''}`
  }
}

class I2Chart extends HTMLElement{
  constructor(){ super(); this.attachShadow({mode:'open'}); }
  static get styles(){
    return /* css */ `
      :host{display:flex;flex-direction:column;position:relative;height:855px;padding-top:4px;box-sizing:border-box;}
      .head{
        height:16px;margin-left:52px;width:1800px;box-sizing:border-box;flex:none;border:1px solid #000;border-width:1px 0 1px 1px;
        background:#fff;font-size:11px;line-height:14px;padding-left:824px;margin-bottom:1px;
      }
      .top{height:1px;flex:none;margin-left:52px;width:1800px;background:#000;}
      .panes{display:flex;flex-direction:column;}
      ::slotted(chart-pane){margin-bottom:3px;}
      ::slotted(chart-pane:last-child){margin-bottom:0;}
      .seps{position:absolute;left:52px;top:0;width:1799px;height:855px;pointer-events:none;}
      .seps div{position:absolute;left:0;right:0;height:3px;box-sizing:border-box;border:1px solid #a0a0a0;border-width:1px 0;background:#fff;}
      .axis{flex:1;display:block;}
      .over{position:absolute;left:0;top:0;z-index:2;pointer-events:none;}
      text{font:10.5px "Liberation Sans",Arial,sans-serif;fill:#222;}
      .scroll{position:absolute;left:1857px;top:700px;width:5px;height:135px;background:#e2e2e2;}
    `
  }
  connectedCallback(){
    const P = 148;
    let ticks = '';
    for(let x = 180 - 22.11 * 4; x < 1875; x += 22.11){
      ticks += `<path d="M${Math.round(x)+.5} 984V987" stroke="#000" shape-rendering="crispEdges"/>`;
    }
    MAJOR_X.forEach((x,k) => {
      const s = 10 + k * 5;
      if(s > 85) return;
      ticks += `<path d="M${x+.5} 984V989" stroke="#000" shape-rendering="crispEdges"/>`;
      ticks += `<text x="${x-1}" y="998" text-anchor="middle">${Math.floor(s/60)}:${String(s%60).padStart(2,'0')}</text>`;
    });
    ticks += `<text x="56" y="996">m:s</text>`;
    const marks = [236,334,399,523,546,675,814,945].map(y => `<rect x="624" y="${y-1}" width="14" height="3" fill="#0000c0"/>`).join('');
    const vline = (x,c,d,w = 1.2) => `<path d="M${x} 169V983" stroke="${c}" stroke-dasharray="${d}" stroke-width="${w}" shape-rendering="crispEdges"/>`;
    const over = /* html */ `
      <rect x="95" y="153" width="5" height="14" fill="#00aa00"/>
      <rect x="1841" y="153" width="5" height="14" fill="#00aa00"/>
      <rect x="1866" y="153" width="5" height="14" fill="#00aa00"/>
      <rect x="1871" y="153" width="5" height="14" fill="#cc0000"/>
      <path d="M77.5 169V984" stroke="#000" stroke-width="2" shape-rendering="crispEdges"/>
      <path d="M1875.5 169V984" stroke="#000" stroke-width="2" shape-rendering="crispEdges"/>
      <path d="M77 983.5H1876" stroke="#000" stroke-width="2" shape-rendering="crispEdges"/>
      <path d="M1838.5 169V983" stroke="#8c8c8c" stroke-dasharray="1 2" shape-rendering="crispEdges"/>
      ${vline(97.5,'#00aa00','6 4')}
      ${vline(1843.5,'#00aa00','6 4')}
      ${vline(1868.5,'#00aa00','12 4')}
      ${vline(1875.5,'#e00000','4 3',1.4)}
      <path d="M631.5 152V983" stroke="#0000a8" stroke-width="1.3" shape-rendering="crispEdges"/>
      ${marks}`;
    this.shadowRoot.innerHTML = /* html */ `
    <style>${I2Chart.styles}</style>
    <div class="head">Data</div>
    <div class="top"></div>
    <div class="panes"><slot></slot></div>
    <div class="seps">
      <div style="top:${301-P}px"></div><div style="top:${436-P}px"></div><div style="top:${579-P}px"></div>
      <div style="top:${692-P}px"></div><div style="top:${845-P}px"></div>
    </div>
    <svg class="axis" width="1870" height="20" viewBox="25 983 1870 20">${ticks}</svg>
    <svg class="over" width="1870" height="855" viewBox="25 148 1870 855">${over}</svg>
    <div class="scroll"></div>`
  }
}

function mag(fill, sym, dir){
  const arrows = dir === 'h'
    ? `<path d="M2 18h9M2 18l2-2M2 18l2 2M11 18l-2-2M11 18l-2 2" stroke="#000" fill="none"/>`
    : `<path d="M20.5 2v11M20.5 2l-2 2M20.5 2l2 2M20.5 13l-2-2M20.5 13l2-2" stroke="#000" fill="none"/>`;
  return `<path d="M12 12l4.5 4" stroke="#c8a040" stroke-width="3.4"/><circle cx="8" cy="7.5" r="6" fill="${fill}" stroke="#8a94a8" stroke-width="1.6"/>${sym}${arrows}`;
}

class RightTools extends HTMLElement{
  constructor(){ super(); this.attachShadow({mode:'open'}); }
  static get styles(){
    return /* css */ `
      :host{flex:none;width:23px;position:relative;display:flex;flex-direction:column;align-items:center;background:linear-gradient(90deg,#cdcdcd,#ececec);}
      svg{width:23px;height:20px;flex:none;display:block;}
      .sel{box-sizing:border-box;width:23px;height:20px;border:1px solid #555;border-radius:3px;background:#b4b8c0;}
      .sel svg{margin:-1px;}
    `
  }
  connectedCallback(){
    const plus = `<path d="M5 7.5h6M8 4.5v6" stroke="#444a66" stroke-width="2"/>`;
    const minus = `<path d="M5 7.5h6" stroke="#444a66" stroke-width="2"/>`;
    const sun = `<circle cx="8" cy="7.5" r="3.7" fill="#ffff00"/>`;
    const red = `<rect x="4.5" y="5" width="7" height="5" fill="#f00000"/>`;
    const list = [
      [124,`<rect x="4" y="5" width="13" height="14" fill="#fff" stroke="#6a7a9a"/><path d="M6 10h8" stroke="#e03050"/><path d="M6 13h8" stroke="#3050c0"/><path d="M6 16h8" stroke="#888"/><path d="M9 6l6-4 5 2-6 4z" fill="#e0a030" stroke="#806010" stroke-width=".6"/>`],
      [146,`<rect x="3" y="3" width="15" height="14" fill="#7aa0e0" stroke="#3050a0"/><path d="M5 7h11M5 10h11M5 13h11" stroke="#e4ecfa" stroke-width="1.4"/>`,1],
      [176,`<path d="M8.5 2v16" stroke="#3a5a3a" stroke-width="2"/><path d="M14.5 2v16" stroke="#4a7ad0" stroke-width="2"/>`],
      [207,`<path d="M12 12l4.5 4" stroke="#2050c0" stroke-width="3.5"/><circle cx="8" cy="7.5" r="6" fill="#eef2f8" stroke="#8a94a8" stroke-width="1.6"/><rect x="5" y="4.5" width="6" height="6" fill="none" stroke="#000" stroke-width="1.4"/>`],
      [228,`<circle cx="9" cy="8" r="6" fill="#e8e8e8" stroke="#c4c4c4" stroke-width="1.6"/><path d="M8 1v16M11 1v16" stroke="#c0c0c0" stroke-width="1.4"/><path d="M13 12l4 4" stroke="#ddd" stroke-width="3"/>`],
      [259,mag('#dde6f4',plus,'h')],
      [281,mag('#dde6f4',minus,'h')],
      [303,mag('#eef2f8',sun,'h')],
      [324,mag('#eef2f8',red,'h')],
      [353,mag('#dde6f4',plus,'v')],
      [376,mag('#dde6f4',minus,'v')],
      [398,mag('#eef2f8',sun,'v')],
      [428,`<path d="M3 2h17v4H3zM3 15h17v4H3z" fill="#d8e0f4" stroke="#3a5aa0"/><path d="M4 10h15M4 10l3-2.5M4 10l3 2.5M19 10l-3-2.5M19 10l-3 2.5" stroke="#000" fill="none" stroke-width="1.2"/>`],
      [451,`<path d="M3 1h17v4H3zM3 15h17v4H3z" fill="#d8e0f4" stroke="#3a5aa0"/><rect x="5" y="7" width="7" height="6" rx="3" fill="none" stroke="#2a9a4a" stroke-width="1.6"/><rect x="11" y="7" width="7" height="6" rx="3" fill="none" stroke="#2a9a4a" stroke-width="1.6"/>`]
    ];
    let y = 122, html = '';
    list.forEach(([top,svg,sel]) => {
      const body = `<svg viewBox="0 0 23 20">${svg}</svg>`;
      html += `<div style="margin-top:${top - y}px" class="${sel ? 'sel' : ''}">${body}</div>`;
      y = top + 20;
    });
    this.shadowRoot.innerHTML = /* html */ `<style>${RightTools.styles}</style>${html}`
  }
}

class StatusBar extends HTMLElement{
  constructor(){ super(); this.attachShadow({mode:'open'}); }
  connectedCallback(){
    this.shadowRoot.innerHTML = /* html */ `
    <style>
      :host{display:flex;height:26px;box-sizing:border-box;border-top:1px solid #a8a8a8;background:#f0eeee;font-size:14.5px;font-weight:bold;align-items:center;}
      .a{width:440px;height:100%;box-sizing:border-box;border-right:1px solid #d0d0d0;}
      .b{width:119px;height:100%;box-sizing:border-box;border-right:1px solid #d0d0d0;}
      .c{display:flex;align-items:center;padding-left:7px;padding-top:2px;white-space:pre;color:#111;}
      .sq{width:8px;height:9px;background:#e00000;border:1px solid #333;box-sizing:border-box;margin-right:4px;}
    </style>
    <div class="a"></div><div class="b"></div>
    <div class="c"><span class="sq"></span><span>Time  0:30.412 [s]</span></div>`
  }
}

customElements.define('motec-app', MotecApp);
customElements.define('title-bar', TitleBar);
customElements.define('menu-bar', MenuBar);
customElements.define('tool-bar', ToolBar);
customElements.define('side-tabs', SideTabs);
customElements.define('info-row', InfoRow);
customElements.define('data-bar', DataBar);
customElements.define('work-area', WorkArea);
customElements.define('combo-row', ComboRow);
customElements.define('legend-row', LegendRow);
customElements.define('chart-pane', ChartPane);
customElements.define('i2-chart', I2Chart);
customElements.define('right-tools', RightTools);
customElements.define('status-bar', StatusBar);
</script>
</body>
</html>
